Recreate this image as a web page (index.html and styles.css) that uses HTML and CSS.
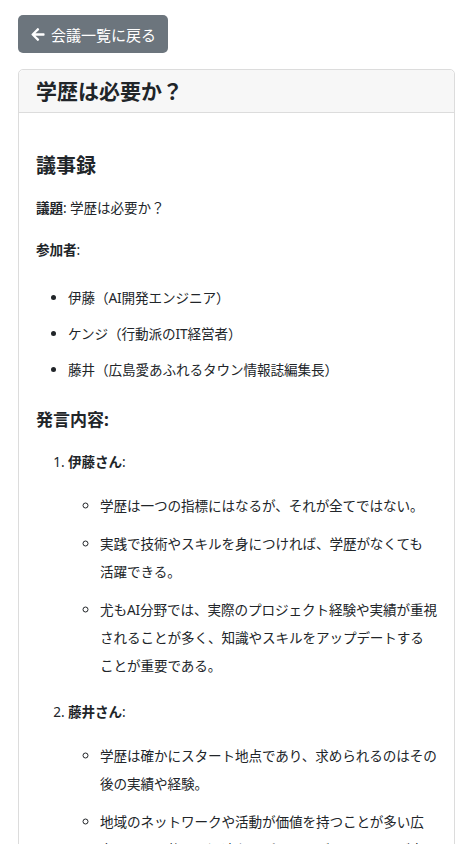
FILE: index.html
```html
<!DOCTYPE html>
<html lang="ja">
<head>
<meta charset="utf-8">
<title>学歴は必要か？</title>
<link rel="stylesheet" href="styles.css">
</head>
<body>
<div class="container">
  <a class="btn-back" href="#">
    <svg class="icon" viewBox="0 0 448 512" aria-hidden="true"><path fill="currentColor" d="M257.5 445.1l-22.2 22.2c-9.4 9.4-24.6 9.4-33.9 0L7 273c-9.4-9.4-9.4-24.6 0-33.9L201.4 44.7c9.4-9.4 24.6-9.4 33.9 0l22.2 22.2c9.5 9.5 9.3 25-.4 34.3L136.6 216H424c13.3 0 24 10.7 24 24v32c0 13.3-10.7 24-24 24H136.6l120.5 114.8c9.8 9.3 10 24.8.4 34.3z"/></svg>
    <span>会議一覧に戻る</span>
  </a>
  <div class="card">
    <div class="card-header"><h1 class="card-title">学歴は必要か？</h1></div>
    <div class="card-body">
      <h2 class="sec-title">議事録</h2>
      <p class="para"><strong>議題</strong>: 学歴は必要か？</p>
      <p class="para"><strong>参加者</strong>:</p>
      <ul class="members">
        <li>伊藤（AI開発エンジニア）</li>
        <li>ケンジ（行動派のIT経営者）</li>
        <li>藤井（広島愛あふれるタウン情報誌編集長）</li>
      </ul>
      <h3 class="sub-title">発言内容:</h3>
      <ol class="speakers">
        <li>
          <div class="speaker"><strong>伊藤さん</strong>:</div>
          <ul class="points">
            <li>学歴は一つの指標にはなるが、それが全てではない。</li>
            <li>実践で技術やスキルを身につければ、学歴がなくても<span class="nw">活躍</span>できる。</li>
            <li>尤もAI分野では、実際のプロジェクト経験や実績が重視されることが多く、知識やスキルをアップデートすることが重要である。</li>
          </ul>
        </li>
        <li>
          <div class="speaker"><strong>藤井さん</strong>:</div>
          <ul class="points">
            <li>学歴は確かにスタート地点であり、求められるのはその後の実績や経験。</li>
            <li>地域のネットワークや活動が価値を持つことが多い広島では、柔軟かつ迅速なアプローチができることが大切だ。</li>
          </ul>
        </li>
      </ol>
    </div>
  </div>
</div>
</body>
</html>
```
FILE: styles.css
```css
html, body {
  margin: 0;
  padding: 0;
  background: #ffffff;
}
body {
  font-family: "Noto Sans", "Noto Sans CJK JP", sans-serif;
  color: #212529;
  font-size: 13.6px;
  letter-spacing: -0.1px;
  font-feature-settings: "pkna";
}
.nw {
  white-space: nowrap;
}
.container {
  padding: 15px 11px 0 18px;
}
.btn-back {
  display: inline-flex;
  align-items: center;
  gap: 6px;
  height: 38px;
  box-sizing: border-box;
  padding: 0 12px 0 13px;
  background: #6c757d;
  color: #ffffff;
  border-radius: 5px;
  text-decoration: none;
  font-size: 15px;
  letter-spacing: 0;
}
.btn-back .icon {
  width: 14px;
  height: 15px;
}
.card {
  margin-top: 16px;
  border: 1px solid #dcdcdc;
  border-radius: 5px;
}
.card-header {
  height: 42px;
  display: flex;
  align-items: center;
  padding: 0 17px;
  background: #f7f7f7;
  border-bottom: 1px solid #dcdcdc;
  border-radius: 5px 5px 0 0;
}
.card-title {
  margin: 0;
  font-size: 21px;
  font-weight: 700;
  line-height: 28px;
  letter-spacing: 0;
}
.card-body {
  padding: 39px 17px 0 17px;
}
.sec-title {
  margin: 0 0 14px;
  font-size: 20px;
  line-height: 28px;
  font-weight: 700;
  letter-spacing: 0;
}
.para {
  margin: 0 0 14px;
  line-height: 28px;
}
.para strong, .speaker strong {
  font-weight: 700;
}
.members {
  margin: 20px 0 0;
  padding-left: 32px;
  display: flex;
  flex-direction: column;
  gap: 8px;
  line-height: 28px;
}
.sub-title {
  margin: 24px 0 0;
  font-size: 17px;
  line-height: 24px;
  font-weight: 700;
  letter-spacing: 0;
}
.speakers {
  margin: 16px 0 0;
  padding-left: 32px;
  display: flex;
  flex-direction: column;
  gap: 18px;
}
.speaker {
  line-height: 28px;
}
.points {
  list-style: circle;
  margin: 16px 0 0;
  padding-left: 32px;
  display: flex;
  flex-direction: column;
  gap: 10px;
  line-height: 28px;
}
```
